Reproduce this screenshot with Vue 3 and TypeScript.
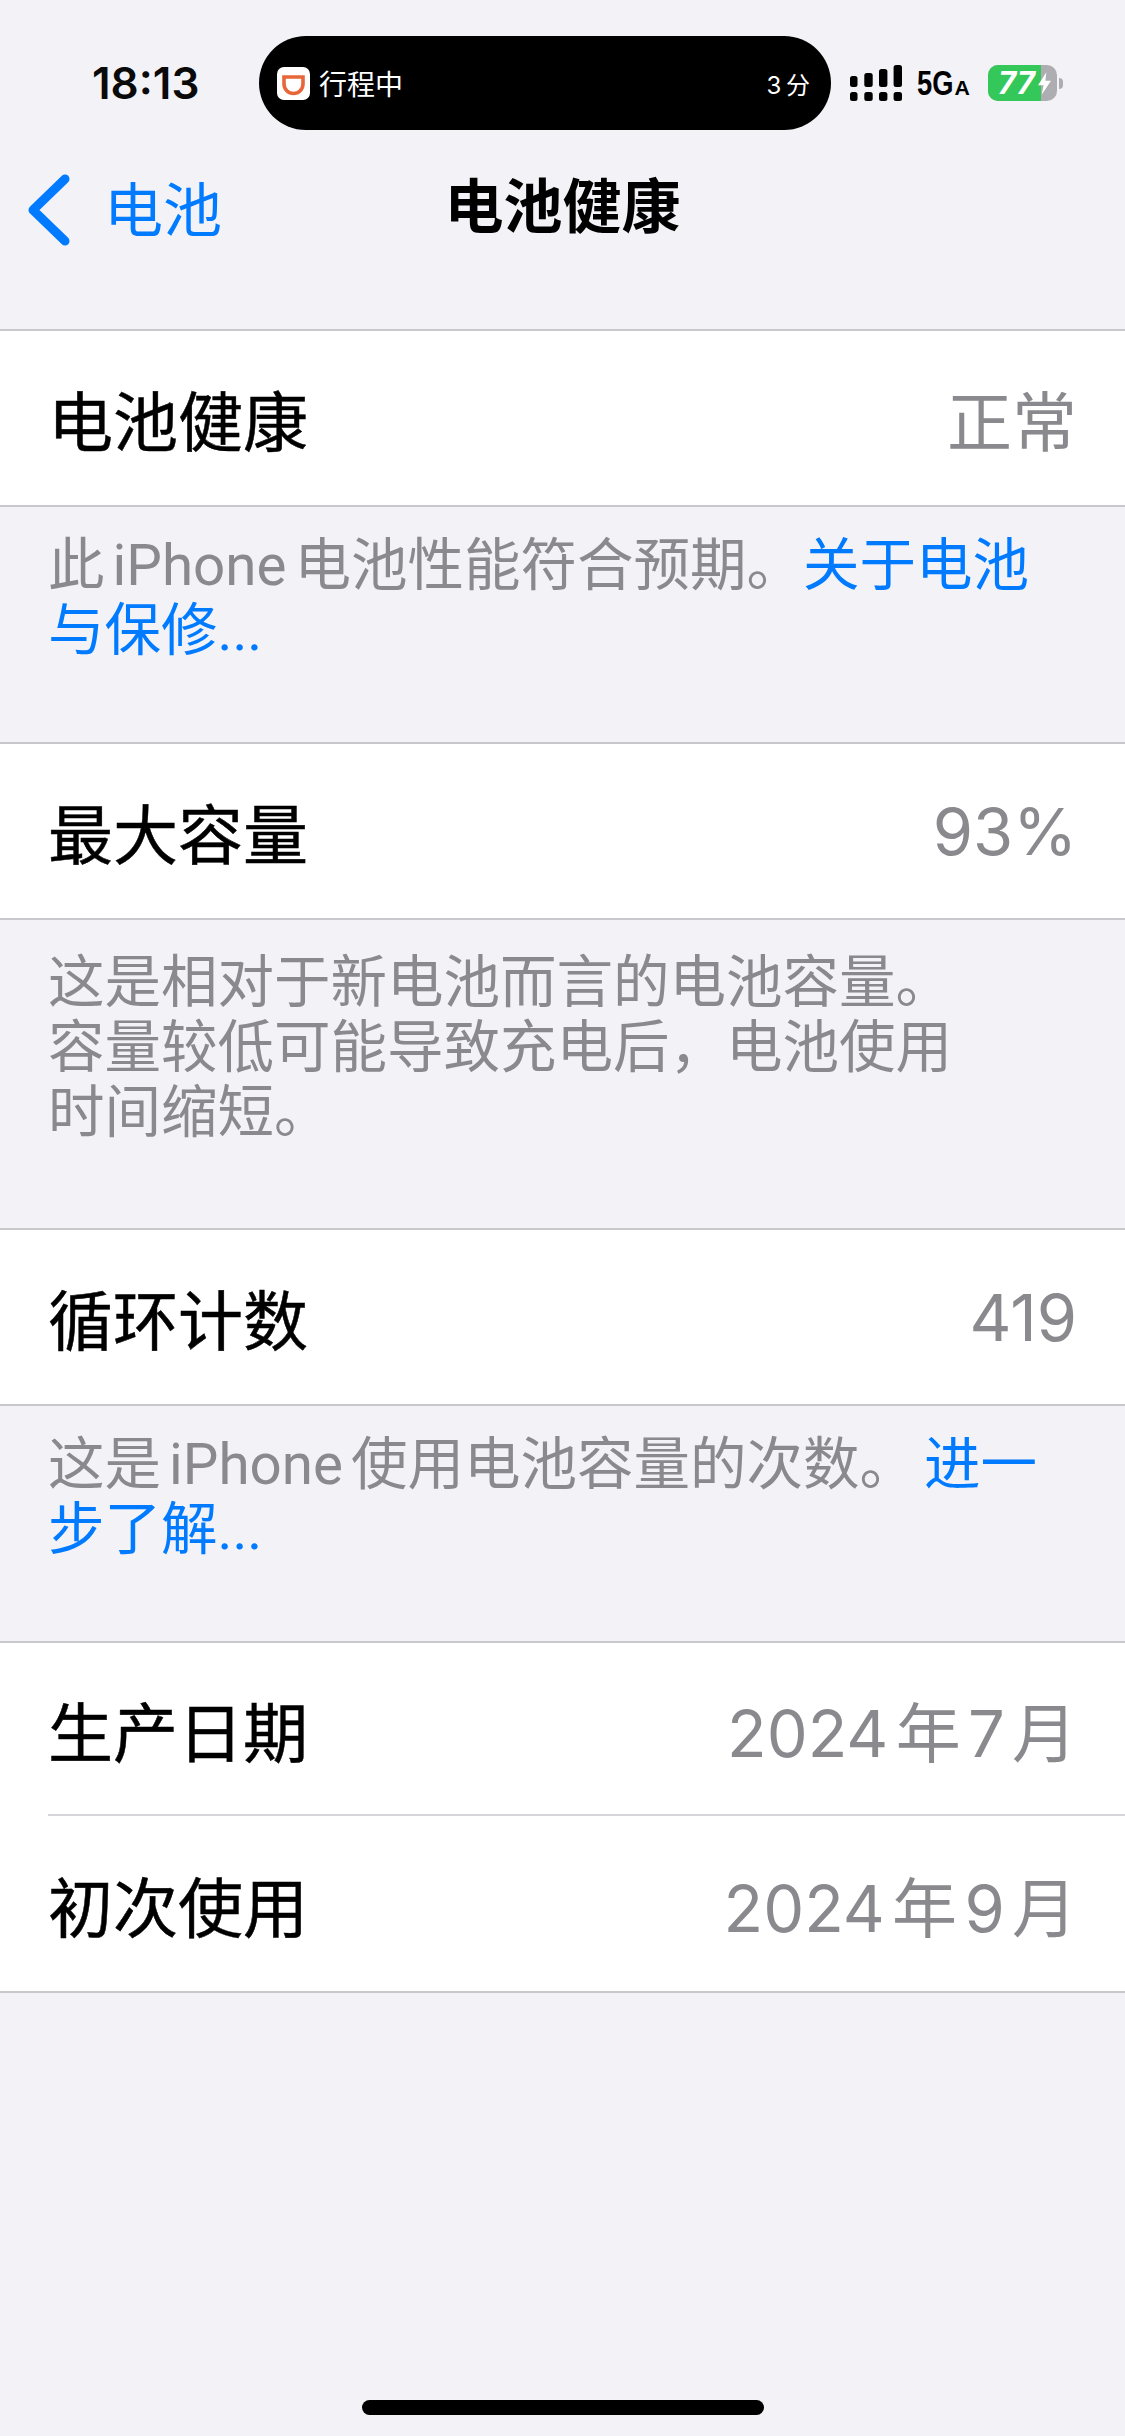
<template>
  <div class="page">
    <div class="status-bar">
      <span class="time">18:13</span>
      <div class="island">
        <div class="app-icon">
          <svg width="33" height="33" viewBox="0 0 33 33">
            <path d="M7 10H26V17A9.500 9.500 0 0 1 7 17Z" fill="none" stroke="#e8673a" stroke-width="3.600" />
          </svg>
        </div>
        <span class="trip">行程中</span>
        <span class="mins">3 分</span>
      </div>
      <div class="status-right">
        <svg class="signal" width="52" height="36" viewBox="0 0 52 36" fill="#000">
          <rect x="0" y="11" width="7.500" height="11" rx="2.500" />
          <rect x="14.300" y="8" width="8.400" height="14" rx="2.500" />
          <rect x="29" y="4" width="8.400" height="18" rx="2.500" />
          <rect x="43.600" y="0" width="8.400" height="22" rx="2.500" />
          <rect x="0" y="27" width="7.500" height="9" rx="2.500" />
          <rect x="14.300" y="27" width="8.400" height="9" rx="2.500" />
          <rect x="29" y="27" width="8.400" height="9" rx="2.500" />
          <rect x="43.600" y="27" width="8.400" height="9" rx="2.500" />
        </svg>
        <span class="network">5G<small>A</small></span>
        <div class="battery">
          <div class="battery-body">
            <div class="battery-fill"></div>
            <span class="battery-num">77</span>
            <svg class="bolt" width="13" height="23" viewBox="0 0 14 24">
              <path d="M9 0 0 14H6L4 24 14 9H8Z" fill="#fff" />
            </svg>
          </div>
          <div class="battery-cap"></div>
        </div>
      </div>
    </div>

    <div class="nav">
      <div class="back">
        <svg width="46" height="72" viewBox="0 0 46 72">
          <path d="M41 5 9 36 41 67" fill="none" stroke="#007aff" stroke-width="9" stroke-linecap="round" stroke-linejoin="round" />
        </svg>
        <span class="back-label">电池</span>
      </div>
      <span class="title">电池健康</span>
    </div>

    <section v-for="section in sections" :key="section.rows[0].label" class="section">
      <div class="group">
        <div v-for="row in section.rows" :key="row.label" class="row">
          <div class="row-inner">
            <span class="label">{{ row.label }}</span>
            <span class="value">{{ row.value }}</span>
          </div>
        </div>
      </div>
      <p v-if="section.note" class="note" :class="section.noteClass">
        <span v-for="line in section.note" :key="line" class="note-line">{{ line }}</span><a v-if="section.link" class="link">{{ section.link }}</a>
      </p>
    </section>

    <div class="home-bar"></div>
  </div>
</template>

<script setup lang="ts">
interface IRow {
  label: string
  value: string
}

interface ISection {
  rows: IRow[]
  note?: string[]
  link?: string
  noteClass?: string
}

const sections: ISection[] = [
  {
    rows: [{ label: '电池健康', value: '正常' }],
    note: ['此 iPhone 电池性能符合预期。'],
    link: '关于电池与保修...',
    noteClass: 'two-lines',
  },
  {
    rows: [{ label: '最大容量', value: '93%' }],
    note: ['这是相对于新电池而言的电池容量。', '容量较低可能导致充电后\uFF0C电池使用', '时间缩短。'],
    noteClass: 'three-lines',
  },
  {
    rows: [{ label: '循环计数', value: '419' }],
    note: ['这是 iPhone 使用电池容量的次数。'],
    link: ' 进一步了解...',
    noteClass: 'two-lines',
  },
  {
    rows: [
      { label: '生产日期', value: '2024 年 7 月' },
      { label: '初次使用', value: '2024 年 9 月' },
    ],
  },
]
</script>

<style scoped>
.page {
  position: relative;
  height: 2436px;
  overflow: hidden;
  background: #f2f2f7;
  font-family: 'Inter', 'Noto Sans CJK SC', sans-serif;
  color: #000;
}
.status-bar {
  height: 130px;
  box-sizing: border-box;
  padding: 36px 0 0 92px;
  display: flex;
  align-items: center;
}
.time {
  width: 167px;
  flex: none;
  font-size: 44px;
  font-weight: 600;
  color: #0a0a0a;
}
.island {
  width: 572px;
  height: 94px;
  flex: none;
  box-sizing: border-box;
  padding: 0 21px 0 18px;
  background: #000;
  border-radius: 47px;
  display: flex;
  align-items: center;
  color: #fff;
}
.app-icon {
  width: 33px;
  height: 33px;
  background: #fff;
  border-radius: 7px;
}
.app-icon svg {
  display: block;
}
.trip {
  margin-left: 9px;
  font-size: 28px;
  flex: 1;
}
.mins {
  font-size: 24px;
  word-spacing: -2px;
}
.status-right {
  display: flex;
  align-items: center;
  margin: 0 0 0 19px;
}
.signal {
  display: block;
  flex: none;
}
.network {
  flex: none;
  width: 56px;
  margin-left: 15px;
  font-family: 'Liberation Sans', sans-serif;
  font-size: 35px;
  font-weight: 700;
  white-space: nowrap;
  transform: scaleX(0.78);
  transform-origin: left center;
}
.network small {
  display: inline-block;
  margin-left: 1px;
  font-size: 21px;
  transform: scaleX(1.3);
  transform-origin: left center;
}
.battery {
  display: flex;
  align-items: center;
  flex: none;
  margin-left: 15px;
}
.battery-body {
  position: relative;
  width: 69px;
  height: 36px;
  border-radius: 10px;
  background: #adadb2;
  overflow: hidden;
}
.battery-fill {
  position: absolute;
  left: 0;
  top: 0;
  bottom: 0;
  width: 53px;
  background: #34c759;
}
.battery-num {
  position: absolute;
  left: 10px;
  top: -2px;
  font-size: 31px;
  line-height: 40px;
  font-weight: 700;
  font-style: italic;
  color: #fff;
}
.bolt {
  position: absolute;
  left: 50px;
  top: 7px;
}
.battery-cap {
  width: 4px;
  height: 11px;
  margin-left: 2px;
  background: #adadb2;
  border-radius: 0 4px 4px 0;
}
.nav {
  position: relative;
  height: 139px;
  box-sizing: border-box;
  padding-top: 6px;
  display: flex;
  align-items: center;
  justify-content: center;
}
.back {
  position: absolute;
  left: 24px;
  top: 34px;
  display: flex;
  align-items: center;
  color: #007aff;
}
.back-label {
  margin: 0 0 6px 34px;
  font-size: 59px;
}
.title {
  font-size: 59px;
  font-weight: 600;
}
.section:first-of-type {
  margin-top: 60px;
}
.group {
  background: #fff;
  border-top: 2px solid #c8c8cc;
  border-bottom: 2px solid #c8c8cc;
}
.row {
  height: 174px;
  padding-left: 48px;
}
.row:first-child:not(:last-child) {
  height: 171px;
}
.row + .row {
  height: 177px;
}
.row-inner {
  height: 100%;
  box-sizing: border-box;
  padding-right: 48px;
  display: flex;
  align-items: center;
  justify-content: space-between;
}
.row + .row .row-inner {
  border-top: 2px solid #d6d6da;
}
.label {
  font-size: 65px;
  font-weight: 400;
  -webkit-text-stroke: 0.5px #000;
}
.value {
  font-size: 65px;
  word-spacing: -11px;
  color: #8a8a8e;
}
.note {
  margin: 0;
  padding: 27px 56px 0 48px;
  font-family: 'Roboto', 'Noto Sans CJK SC', sans-serif;
  font-size: 56.500px;
  line-height: 65px;
  word-spacing: -6px;
  color: #8a8a8e;
  box-sizing: border-box;
}
.two-lines {
  height: 235px;
}
.three-lines {
  height: 308px;
  padding-top: 31px;
}
.note-line {
  display: block;
}
.note-line:last-of-type {
  display: inline;
}
.link {
  color: #007aff;
}
.home-bar {
  position: absolute;
  left: 362px;
  bottom: 21px;
  width: 402px;
  height: 15px;
  background: #000;
  border-radius: 8px;
}
</style>

<style>
html,
body {
  margin: 0;
  background: #f2f2f7;
}
</style>
